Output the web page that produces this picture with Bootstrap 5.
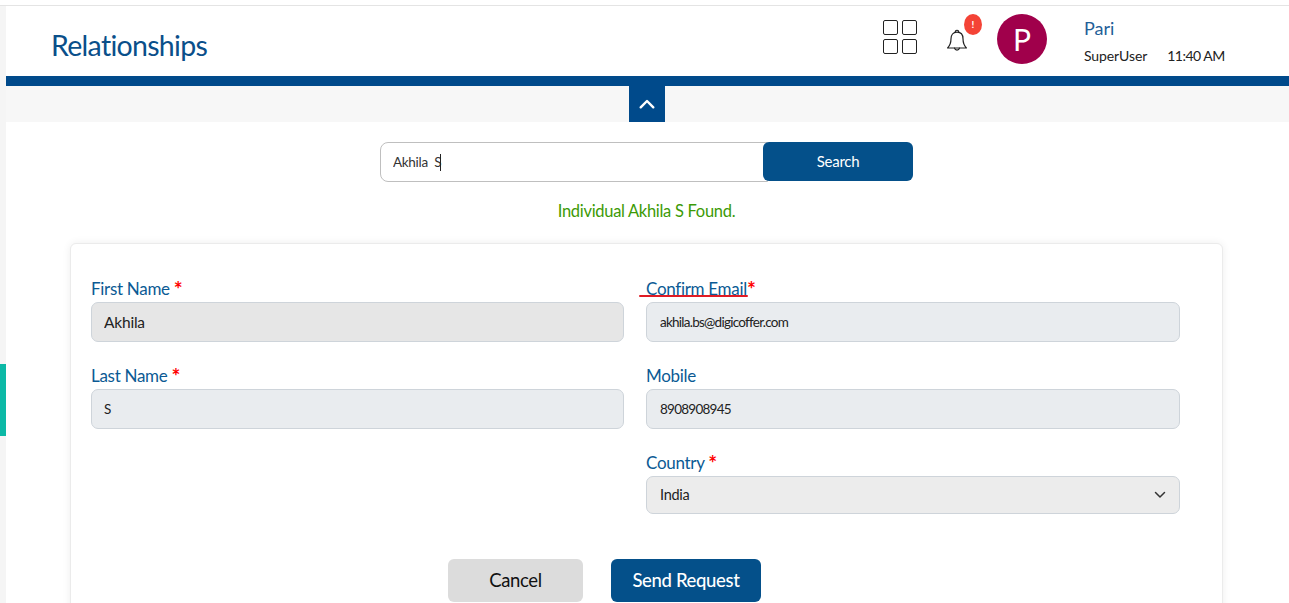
<!DOCTYPE html>
<html lang="en">
<head>
<meta charset="utf-8">
<title>Relationships</title>
<link href="https://cdn.jsdelivr.net/npm/bootstrap@5.3.0/dist/css/bootstrap.min.css" rel="stylesheet">
<style>
html,body{height:603px;overflow:hidden;margin:0;background:#fff;font-family:"Lato","Liberation Sans",sans-serif;}
.shell{height:603px;overflow:hidden;}
.rail{width:6px;background:#f5f5f5;flex:none;padding-top:364px;}
.rail-mark{height:72px;background:#0cb9a6;}
.main-col{min-width:0;}
.main-col>*{flex:none;}
.top-gap{height:6px;border-bottom:1px solid #e4e4e4;margin-left:-6px;background:#fff;position:relative;}
.head-bar{height:70px;padding:0 63px 0 45px;}
.page-title{font-size:28.5px;font-weight:400;color:#0a4f8a;margin:0;letter-spacing:-.7px;position:relative;top:4px;}
.app-grid{display:grid;grid-template-columns:15px 15px;gap:4px;margin-bottom:8px;}
.app-grid i{height:15px;border:1.4px solid #222;border-radius:2px;display:block;}
.bell-wrap{position:relative;width:24px;height:26px;margin-left:28px;margin-top:1px;}
.bell-count{position:absolute;left:19px;top:-15px;width:18px;height:21px;border-radius:50%;background:#f44336;color:#fff;font-size:10px;font-weight:700;line-height:21px;text-align:center;}
.ava{width:50px;height:50px;border-radius:50%;background:#a0004b;color:#fff;font-size:30px;line-height:50px;text-align:center;margin-left:28px;margin-bottom:4px;}
.who{margin-left:37px;width:142px;white-space:nowrap;}
.who-name{font-size:18px;color:#1f6098;line-height:22px;}
.who-sub{font-size:14px;color:#222;line-height:18px;margin-top:8px;letter-spacing:-.1px;}
.who-sub span+span{margin-left:20px;letter-spacing:-.5px;}
.blue-band{height:10px;background:#004a8b;}
.fold-strip{height:36px;background:#f7f7f7;padding-right:2px;}
.fold-btn{width:36px;height:36px;background:#004a8b;}
.search-row{margin-top:20px;margin-right:2px;width:533px;position:relative;}
.search-input{height:40px;border:1px solid #bfbfbf;border-radius:8px 0 0 8px;width:388px;margin-right:-5px;font-size:13.5px;padding:0 12px;color:#333;font-family:inherit;letter-spacing:-.3px;}
.search-input:focus{outline:0;}
.caret-mark{position:absolute;left:60px;top:12px;width:1px;height:17px;background:#222;}
.btn-search{width:150px;height:39px;background:#04508a;color:#fff;font-size:15px;border:0;border-radius:6px;position:relative;padding:0;letter-spacing:-.25px;}
.found-msg{color:#3c9a06;font-size:16.5px;line-height:20px;margin:19px 0 22px;padding-right:2px;letter-spacing:-.3px;}
.form-box{margin-left:64px;width:1153px;border:1px solid #ebebeb;border-radius:6px;box-shadow:0 0 8px rgba(0,0,0,.07);padding:33px 43px 40px 20px;background:#fff;}
.form-box .row{--bs-gutter-x:22px;}
.fld{height:87px;}
.fld-label{font-size:17px;line-height:24px;color:#0b5a94;margin:0 0 2px;display:block;position:relative;letter-spacing:-.3px;height:23px;}
.star{color:#f00;font-weight:700;font-size:21px;line-height:1;vertical-align:-2px;letter-spacing:0;}
.fld-input{height:40px;border:1px solid #ced4da;border-radius:7px;background:#e9ecef;font-size:13.5px;color:#222;padding:0 13px;font-family:inherit;width:100%;letter-spacing:-.75px;}
.col-6:first-child .fld-input{padding-left:12px;}
.col-6+.col-6 .fld-input{width:calc(100% + 1px);}
.fld-input.is-first{background:#e6e6e6;font-size:15.5px;letter-spacing:-.2px;}
.fld-input.is-country{background:#ececec;height:38px;font-size:14.5px;letter-spacing:-.3px;appearance:none;-webkit-appearance:none;}
.fld-input:disabled{opacity:1;color:#222;}
.scribble{position:absolute;left:-7px;top:18px;width:109px;height:2px;background:#e01b24;border-radius:2px;}
.select-wrap{position:relative;}
.select-wrap svg{position:absolute;right:13px;top:15px;}
.act-row{margin-top:21px;padding-left:357px;gap:28px;}
.btn-act{height:43px;border:0;border-radius:6px;font-size:18.5px;padding:0;letter-spacing:-.35px;}
.btn-cancel{width:135px;background:#dcdcdc;color:#111;}
.btn-send{width:150px;background:#04508a;color:#fff;font-weight:500;}
</style>
</head>
<body>
<div class="shell d-flex">
  <div class="rail"><div class="rail-mark"></div></div>
  <div class="main-col flex-grow-1 d-flex flex-column">
    <div class="top-gap"></div>
    <header class="head-bar d-flex align-items-center bg-white">
      <h1 class="page-title">Relationships</h1>
      <div class="ms-auto d-flex align-items-center">
        <div class="app-grid"><i></i><i></i><i></i><i></i></div>
        <div class="bell-wrap">
          <svg width="24" height="26" viewBox="0 0 24 26" fill="none" stroke="#222" stroke-width="1.2" stroke-linejoin="round" stroke-linecap="round">
            <path d="M12 3.2c-4 0-6 3-6 6.6 0 4.6-1.3 7-3.4 9.2h18.8c-2.100-2.200-3.400-4.600-3.400-9.200 0-3.600-2-6.600-6-6.600z"/>
            <path d="M10.400 3.500a1.700 1.700 0 1 1 3.200 0"/>
            <path d="M9.500 19.200a2.600 2.600 0 0 0 5 0"/>
          </svg>
          <span class="bell-count">!</span>
        </div>
        <div class="ava">P</div>
        <div class="who">
          <div class="who-name">Pari</div>
          <div class="who-sub d-flex"><span>SuperUser</span><span>11:40 AM</span></div>
        </div>
      </div>
    </header>
    <div class="blue-band"></div>
    <div class="fold-strip d-flex justify-content-center">
      <div class="fold-btn d-flex align-items-center justify-content-center">
        <svg width="16" height="10" viewBox="0 0 16 10" fill="none" stroke="#fff" stroke-width="2.400" stroke-linecap="round" stroke-linejoin="round"><path d="M1.700 8.300 8 2l6.300 6.300"/></svg>
      </div>
    </div>
    <div class="search-row d-flex align-self-center align-items-start">
      <input class="search-input" type="text" value="Akhila  S">
      <span class="caret-mark"></span>
      <button class="btn btn-search" type="button">Search</button>
    </div>
    <div class="found-msg text-center">Individual Akhila S Found.</div>
    <div class="form-box">
      <div class="row">
        <div class="col-6">
          <div class="fld"><label class="fld-label">First Name <span class="star">*</span></label><input class="fld-input is-first" value="Akhila" disabled></div>
          <div class="fld"><label class="fld-label">Last Name <span class="star">*</span></label><input class="fld-input" value="S" disabled></div>
        </div>
        <div class="col-6">
          <div class="fld"><label class="fld-label">Confirm Email<span class="star">*</span><span class="scribble"></span></label><input class="fld-input" value="akhila.bs@digicoffer.com" disabled></div>
          <div class="fld"><label class="fld-label">Mobile</label><input class="fld-input" value="8908908945" disabled></div>
          <div class="fld"><label class="fld-label">Country <span class="star">*</span></label>
            <div class="select-wrap"><select class="fld-input is-country"><option>India</option></select>
              <svg width="12" height="8" viewBox="0 0 12 8" fill="none" stroke="#333" stroke-width="1.500" stroke-linecap="round" stroke-linejoin="round"><path d="M1.500 1.500 6 6l4.500-4.500"/></svg>
            </div>
          </div>
        </div>
      </div>
      <div class="act-row d-flex">
        <button class="btn btn-act btn-cancel" type="button">Cancel</button>
        <button class="btn btn-act btn-send" type="button">Send Request</button>
      </div>
    </div>
  </div>
</div>
</body>
</html>
